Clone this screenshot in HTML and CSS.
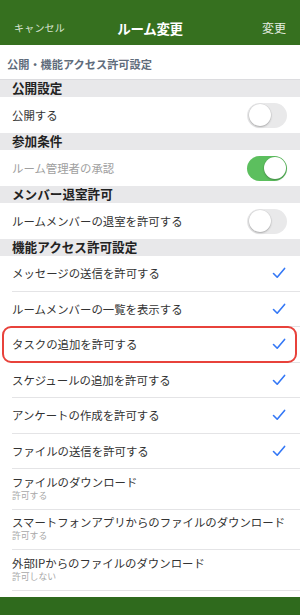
FILE: index.html
```html
<!DOCTYPE html>
<html lang="ja">
<head>
<meta charset="utf-8">
<link rel="stylesheet" href="styles.css">
</head>
<body>
<div class="screen">
  <header class="navbar">
    <span class="nav-left">キャンセル</span>
    <span class="nav-title">ルーム変更</span>
    <span class="nav-right">変更</span>
  </header>
  <div class="subheader">公開・機能アクセス許可設定</div>

  <div class="band">公開設定</div>
  <div class="row toggle-row">
    <span class="label">公開する</span>
    <span class="toggle"><span class="knob"></span></span>
  </div>

  <div class="band">参加条件</div>
  <div class="row toggle-row">
    <span class="label disabled">ルーム管理者の承認</span>
    <span class="toggle on"><span class="knob"></span></span>
  </div>

  <div class="band">メンバー退室許可</div>
  <div class="row toggle-row">
    <span class="label">ルームメンバーの退室を許可する</span>
    <span class="toggle"><span class="knob"></span></span>
  </div>

  <div class="band">機能アクセス許可設定</div>
  <div class="list">
    <div class="row check-row">
      <span class="label">メッセージの送信を許可する</span>
      <svg class="check" viewBox="0 0 14 12"><path d="M1.5 6.5 L5.2 10.2 L12.6 1.4"/></svg>
    </div>
    <div class="row check-row">
      <span class="label">ルームメンバーの一覧を表示する</span>
      <svg class="check" viewBox="0 0 14 12"><path d="M1.5 6.5 L5.2 10.2 L12.6 1.4"/></svg>
    </div>
    <div class="row check-row highlighted">
      <span class="label">タスクの追加を許可する</span>
      <svg class="check" viewBox="0 0 14 12"><path d="M1.5 6.5 L5.2 10.2 L12.6 1.4"/></svg>
    </div>
    <div class="row check-row">
      <span class="label">スケジュールの追加を許可する</span>
      <svg class="check" viewBox="0 0 14 12"><path d="M1.5 6.5 L5.2 10.2 L12.6 1.4"/></svg>
    </div>
    <div class="row check-row">
      <span class="label">アンケートの作成を許可する</span>
      <svg class="check" viewBox="0 0 14 12"><path d="M1.5 6.5 L5.2 10.2 L12.6 1.4"/></svg>
    </div>
    <div class="row check-row">
      <span class="label">ファイルの送信を許可する</span>
      <svg class="check" viewBox="0 0 14 12"><path d="M1.5 6.5 L5.2 10.2 L12.6 1.4"/></svg>
    </div>
    <div class="row detail-row">
      <span class="label">ファイルのダウンロード</span>
      <span class="detail">許可する</span>
    </div>
    <div class="row detail-row">
      <span class="label">スマートフォンアプリからのファイルのダウンロード</span>
      <span class="detail">許可する</span>
    </div>
    <div class="row detail-row">
      <span class="label">外部IPからのファイルのダウンロード</span>
      <span class="detail">許可しない</span>
    </div>
  </div>
  <div class="spacer"></div>
  <footer class="tabbar"></footer>
</div>
</body>
</html>
```

FILE: styles.css
```css
* { box-sizing: border-box; }
html, body {
  margin: 0;
  padding: 0;
  background: #ffffff;
}
body {
  font-family: "Noto Sans CJK JP", "Noto Sans", sans-serif;
  color: #333333;
}
.screen {
  width: 300px;
  height: 615px;
  display: flex;
  flex-direction: column;
  overflow: hidden;
  background: #ffffff;
}
.navbar {
  height: 45px;
  flex: none;
  background: #36701f;
  display: flex;
  align-items: center;
  justify-content: space-between;
  padding: 10px 14px 0 14px;
  color: #ffffff;
}
.nav-left {
  font-size: 10px;
  color: #dbe6d5;
  width: 60px;
  letter-spacing: 0.2px;
}
.nav-title {
  font-size: 13.5px;
  font-weight: 700;
  letter-spacing: -0.3px;
}
.nav-right {
  font-size: 12px;
  color: #e6eee2;
  width: 60px;
  text-align: right;
}
.subheader {
  height: 35px;
  flex: none;
  display: flex;
  align-items: center;
  padding: 3px 0 0 7px;
  font-size: 11.2px;
  font-weight: 700;
  color: #5f6c7b;
  border-bottom: 1px solid #dcdcdf;
}
.band {
  height: 17px;
  flex: none;
  background: #e8e8ea;
  display: flex;
  align-items: center;
  padding-left: 12px;
  font-size: 12.6px;
  font-weight: 700;
  color: #222222;
  line-height: 1;
}
.row {
  flex: none;
  display: flex;
  align-items: center;
  justify-content: space-between;
  margin-left: 12px;
  padding-right: 12px;
  position: relative;
}
.label {
  font-size: 11.4px;
  color: #333333;
  line-height: 14px;
  white-space: nowrap;
}
.label.disabled {
  color: #a0a0a0;
}
.toggle-row {
  height: 36px;
}
.toggle {
  width: 40px;
  height: 25px;
  border-radius: 13px;
  background: #e9e9ea;
  display: flex;
  align-items: center;
  padding: 1.5px;
  margin-right: 1px;
}
.toggle .knob {
  width: 22px;
  height: 22px;
  border-radius: 50%;
  background: #ffffff;
  box-shadow: 0 1px 2px rgba(0,0,0,0.25), 0 0 0 0.5px rgba(0,0,0,0.06);
}
.toggle.on {
  background: #5cbf5e;
  justify-content: flex-end;
}
.list {
  display: flex;
  flex-direction: column;
}
.check-row {
  height: 35.5px;
  border-bottom: 1px solid #e4e4e6;
}
.check {
  width: 14px;
  height: 12px;
  margin-right: 2px;
  fill: none;
  stroke: #3478f6;
  stroke-width: 1.6;
  stroke-linecap: round;
  stroke-linejoin: round;
}
.highlighted::after {
  content: "";
  position: absolute;
  left: -10px;
  right: 3px;
  top: -1px;
  bottom: -1px;
  border: 2px solid #e8423b;
  border-radius: 9px;
}
.detail-row {
  height: 40.5px;
  flex-direction: column;
  align-items: flex-start;
  justify-content: center;
  border-bottom: 1px solid #e4e4e6;
  padding-bottom: 1px;
}
.detail {
  font-size: 8.8px;
  color: #a8a8a8;
  line-height: 12px;
  margin-top: 1px;
}
.spacer {
  flex: 1;
}
.tabbar {
  height: 18px;
  flex: none;
  background: #2f6a1d;
}
```
